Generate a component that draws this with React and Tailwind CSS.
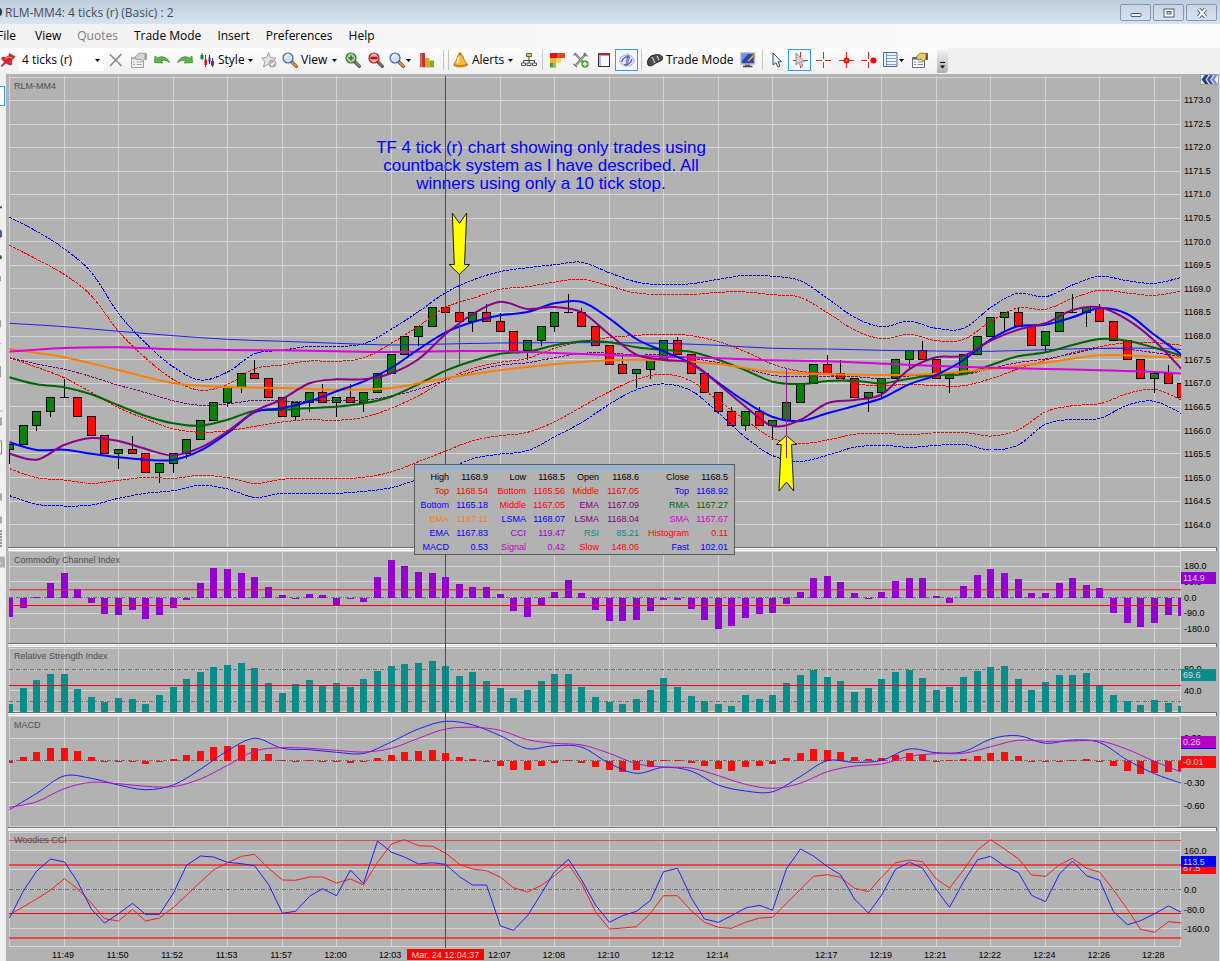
import React from "react";

/* ---------- geometry ---------- */
const BARS = 87;
const xOf = (i) => Math.round(9 + 13.63 * i) + 0.5;
const tickY = (t) => Math.round(100 + t * 4.712) + 0.5;
// Curve samples are stored in thirds of a pixel below a base line.
const third = (base) => (v) => base + v / 3;
const upper = third(190);
const lower = third(540);

function smooth(values, step, toY) {
  const p = values.map((v, k) => [9.5 + 13.63 * k * step, toY(v)]);
  let d = `M${p[0][0]} ${p[0][1]}`;
  for (let k = 0; k < p.length - 1; k++) {
    const a = p[k - 1] || p[k];
    const b = p[k];
    const c = p[k + 1];
    const e = p[k + 2] || c;
    const f = (n) => n.toFixed(1);
    d += `C${f(b[0] + (c[0] - a[0]) / 6)} ${f(b[1] + (c[1] - a[1]) / 6)} ${f(c[0] - (e[0] - b[0]) / 6)} ${f(c[1] - (e[1] - b[1]) / 6)} ${f(c[0])} ${f(c[1])}`;
  }
  return d;
}
const poly = (values, toY) => values.map((v, i) => `${xOf(i)},${toY(v).toFixed(1)}`).join(" ");

/* ---------- data: candles as [colour, top, bottom, high, low] in ticks below 1173.0 ---------- */
const CANDLES = [
  ["g", 73, 74, 73, 77], ["g", 69, 73], ["g", 66, 69, 66, 70], ["g", 63, 66, 63, 67], ["d", 63, 63, 59, 63],
  ["r", 63, 67], ["r", 67, 71], ["r", 71, 75], ["g", 74, 75, 74, 78], ["r", 74, 75, 71, 75],
  ["r", 75, 79], ["g", 77, 79, 77, 81], ["g", 75, 77, 75, 79], ["g", 72, 75, 72, 76], ["g", 68, 72],
  ["g", 64, 68], ["g", 61, 64, 61, 65], ["g", 58, 61, 58, 62], ["r", 58, 59, 55, 59], ["r", 59, 63],
  ["r", 63, 67], ["g", 64, 67, 64, 68], ["g", 62, 64, 62, 66], ["r", 62, 64, 60, 64], ["g", 63, 64, 63, 67],
  ["r", 63, 64, 60, 64], ["g", 62, 64, 62, 66], ["g", 58, 62], ["g", 54, 58], ["g", 50, 54],
  ["g", 48, 50, 48, 52], ["g", 44, 48], ["r", 44, 45], ["r", 45, 47, 43, 47], ["g", 45, 47, 45, 49],
  ["r", 45, 47, 43, 47], ["r", 47, 49, 45, 49], ["r", 49, 53], ["g", 51, 53, 51, 55], ["g", 48, 51, 48, 52],
  ["g", 45, 48, 45, 49], ["d", 45, 45, 41, 45], ["r", 45, 48, 44, 48], ["r", 48, 52], ["r", 52, 56],
  ["r", 56, 58, 54, 58], ["g", 57, 58, 57, 61], ["g", 55, 57, 55, 59], ["g", 51, 55], ["r", 51, 54, 50, 54],
  ["r", 54, 58], ["r", 58, 62], ["r", 62, 66], ["r", 66, 69, 65, 69], ["g", 66, 69, 66, 70],
  ["r", 66, 69, 65, 69], ["g", 68, 69, 68, 72], ["g", 64, 68], ["g", 60, 64], ["g", 56, 60],
  ["r", 56, 58, 54, 58], ["r", 58, 59, 55, 59], ["r", 59, 63], ["g", 62, 63, 62, 66], ["g", 59, 62, 59, 63],
  ["g", 55, 59], ["g", 53, 55, 53, 57], ["r", 53, 55, 51, 55], ["r", 55, 59], ["g", 58, 59, 58, 62],
  ["g", 54, 58], ["g", 50, 54], ["g", 46, 50], ["g", 45, 46, 45, 49], ["r", 45, 48, 44, 48],
  ["r", 48, 52], ["g", 49, 52, 49, 53], ["g", 45, 49], ["d", 45, 45, 41, 45], ["g", 44, 45, 44, 48],
  ["r", 44, 47, 43, 47], ["r", 47, 51], ["r", 51, 55], ["r", 55, 59], ["g", 58, 59, 58, 62],
  ["r", 58, 60, 56, 60], ["r", 60, 63],
];

const BANDS = [
  ["#0000ff", [82, 124, 176, 247, 370, 460, 530, 570, 546, 491, 481, 469, 469, 461, 418, 365, 308, 270, 245, 233, 224, 217, 248, 276, 284, 281, 268, 256, 259, 272, 325, 382, 410, 394, 415, 415, 352, 310, 320, 285, 259, 272, 280, 262]],
  ["#ff0000", [166, 208, 253, 317, 424, 505, 568, 601, 583, 536, 525, 513, 514, 503, 460, 409, 352, 325, 298, 290, 276, 268, 288, 309, 314, 314, 307, 306, 314, 322, 368, 420, 446, 433, 452, 448, 394, 354, 358, 325, 301, 309, 316, 303]],
  ["#ff0000", [503, 532, 563, 607, 653, 687, 716, 727, 722, 709, 696, 689, 691, 682, 655, 617, 570, 535, 517, 505, 475, 455, 443, 436, 433, 437, 455, 485, 523, 544, 552, 580, 587, 583, 587, 587, 566, 537, 511, 488, 470, 458, 458, 466]],
  ["#ff0000", [836, 863, 870, 880, 871, 862, 865, 856, 863, 880, 868, 865, 866, 862, 846, 815, 783, 752, 737, 727, 695, 650, 605, 568, 553, 573, 632, 690, 745, 761, 750, 733, 730, 734, 728, 727, 738, 720, 666, 647, 641, 611, 598, 631]],
  ["#0000ff", [917, 943, 948, 945, 925, 910, 902, 886, 897, 922, 910, 910, 910, 904, 893, 868, 840, 806, 792, 782, 740, 697, 643, 599, 582, 602, 668, 742, 797, 814, 796, 772, 766, 772, 766, 763, 780, 765, 703, 688, 685, 646, 634, 671]],
  ["#800080", [503, 522, 538, 560, 586, 608, 632, 646, 642, 631, 633, 633, 631, 631, 618, 598, 570, 545, 526, 518, 503, 490, 489, 495, 495, 505, 518, 536, 556, 560, 560, 560, 566, 558, 554, 554, 535, 518, 507, 491, 475, 478, 488, 500]],
];

const THIN_EMA = [400, 410, 424, 437, 448, 454, 460, 465, 462, 459, 458, 458, 460, 466, 475, 477, 481, 483, 484, 479, 475, 475, 483];
const SMA = [485, 474, 472, 478, 480, 481, 484, 486, 484, 483, 489, 495, 500, 505, 511, 514, 521, 528, 533, 537, 541, 546, 556];
const EMA = [477, 502, 540, 579, 591, 594, 599, 594, 565, 541, 523, 511, 511, 522, 546, 552, 555, 551, 537, 518, 496, 500, 507];
const RMA = [562, 583, 592, 613, 646, 678, 700, 707, 689, 662, 660, 654, 650, 640, 620, 583, 542, 513, 491, 485, 466, 454, 457, 472, 480, 485, 509, 541, 575, 582, 573, 572, 580, 566, 555, 553, 525, 499, 487, 465, 447, 452, 473, 497];
const LSMA_BLUE = [757, 780, 779, 791, 802, 809, 810, 782, 729, 666, 655, 634, 604, 574, 534, 478, 427, 396, 376, 366, 340, 336, 385, 447, 484, 520, 578, 635, 681, 693, 670, 648, 625, 583, 555, 510, 448, 409, 404, 382, 354, 372, 434, 494];
const LSMA_PURPLE = [791, 809, 765, 744, 753, 777, 796, 773, 724, 664, 628, 580, 568, 568, 550, 508, 432, 372, 335, 357, 351, 367, 433, 494, 510, 519, 582, 650, 708, 690, 640, 630, 613, 538, 502, 497, 452, 419, 400, 360, 352, 389, 452, 538];

const CCI = [231, 204, 171, 129, 99, 148, 189, 221, 225, 210, 237, 225, 204, 179, 129, 84, 87, 99, 111, 141, 165, 174, 162, 165, 196, 176, 186, 111, 60, 78, 96, 99, 111, 132, 141, 141, 162, 212, 231, 196, 156, 120, 159, 210, 243, 243, 240, 212, 179, 179, 206, 240, 266, 258, 234, 221, 219, 191, 156, 114, 108, 126, 159, 176, 156, 123, 114, 114, 168, 189, 138, 105, 87, 99, 117, 159, 159, 129, 114, 135, 144, 219, 249, 261, 249, 225, 228];
const RSI = [492, 444, 420, 402, 402, 447, 471, 486, 474, 477, 492, 465, 441, 417, 396, 381, 375, 369, 384, 429, 459, 432, 420, 435, 429, 441, 417, 393, 378, 372, 369, 363, 378, 408, 396, 423, 444, 474, 450, 423, 402, 402, 441, 471, 486, 492, 477, 450, 414, 441, 468, 483, 492, 498, 465, 477, 465, 429, 405, 390, 411, 423, 456, 444, 417, 396, 390, 414, 450, 441, 411, 393, 381, 378, 417, 450, 426, 405, 405, 399, 435, 465, 483, 495, 480, 489, 498];
const MACD_BARS = [669, 651, 636, 624, 624, 633, 651, 665, 665, 665, 672, 665, 657, 645, 633, 621, 618, 615, 624, 642, 660, 665, 660, 665, 665, 669, 665, 654, 645, 636, 633, 630, 639, 651, 657, 665, 677, 689, 689, 677, 668, 660, 668, 680, 689, 695, 689, 680, 660, 660, 668, 677, 686, 692, 680, 677, 671, 654, 639, 627, 630, 636, 651, 657, 654, 645, 639, 645, 663, 660, 657, 648, 639, 636, 648, 665, 665, 663, 660, 657, 665, 677, 692, 701, 698, 695, 693];
const MACD_LINE = [809, 760, 708, 715, 735, 749, 735, 688, 632, 595, 625, 629, 637, 640, 606, 567, 544, 555, 587, 626, 617, 622, 670, 700, 682, 693, 735, 753, 755, 710, 662, 667, 661, 627, 638, 635, 597, 587, 610, 600, 608, 660, 701, 730];
const MACD_SIGNAL = [802, 785, 746, 727, 731, 739, 740, 717, 676, 633, 623, 625, 631, 636, 625, 595, 567, 562, 571, 599, 610, 615, 640, 671, 681, 684, 707, 733, 745, 730, 695, 678, 672, 649, 641, 640, 620, 601, 604, 603, 603, 628, 664, 697];
const SLOW = [1124, 1100, 1077, 1050, 1016, 1046, 1090, 1136, 1143, 1108, 1143, 1134, 1102, 1066, 1026, 990, 968, 949, 943, 985, 1020, 1021, 1011, 1011, 1029, 1017, 1035, 967, 912, 899, 917, 919, 939, 973, 987, 992, 1012, 1043, 1056, 1036, 1007, 974, 1030, 1115, 1167, 1164, 1160, 1120, 1067, 1067, 1113, 1147, 1162, 1165, 1147, 1134, 1132, 1090, 1048, 1009, 1004, 1012, 1045, 1055, 1012, 968, 960, 965, 1017, 1044, 990, 930, 899, 927, 956, 1005, 1009, 974, 955, 985, 996, 1050, 1108, 1168, 1177, 1145, 1149];
const FAST = [1134, 1052, 994, 957, 966, 1025, 1108, 1149, 1121, 1090, 1123, 1123, 1059, 976, 948, 951, 967, 971, 977, 1033, 1120, 1114, 1069, 1046, 1067, 990, 1031, 903, 937, 951, 972, 968, 973, 1010, 1035, 1035, 1158, 1171, 1127, 1060, 995, 958, 1019, 1095, 1147, 1127, 1114, 1081, 995, 985, 1075, 1137, 1147, 1127, 1104, 1096, 1111, 986, 927, 948, 980, 1004, 1077, 1119, 1066, 988, 967, 984, 1049, 1102, 1025, 959, 949, 978, 998, 1066, 1085, 1002, 963, 1007, 1020, 1115, 1154, 1142, 1121, 1098, 1117];

const TIMES = ["", "11:49", "11:50", "11:52", "11:53", "11:57", "12:00", "12:03", "", "12:07", "12:08", "12:10", "12:12", "12:14", "", "12:17", "12:19", "12:21", "12:22", "12:24", "12:26", "12:28"];

const K = "text-black", R = "text-[#ff0000]", B = "text-[#0000ff]", P = "text-[#800080]", G = "text-[#006400]", O = "text-[#ff8000]", M = "text-[#d800d8]", V = "text-[#9400d3]", T = "text-[#008b8b]", S = "text-[#c000c0]";
const READOUT = [
  [["High", "1168.9", K], ["Low", "1168.5", K], ["Open", "1168.6", K], ["Close", "1168.5", K]],
  [["Top", "1168.54", R], ["Bottom", "1165.56", R], ["Middle", "1167.05", R], ["Top", "1168.92", B]],
  [["Bottom", "1165.18", B], ["Middle", "1167.05", R], ["EMA", "1167.09", P], ["RMA", "1167.27", G]],
  [["EMA", "1167.11", O], ["LSMA", "1168.07", B], ["LSMA", "1168.04", P], ["SMA", "1167.67", M]],
  [["EMA", "1167.83", B], ["CCI", "119.47", V], ["RSI", "85.21", T], ["Histogram", "0.11", R]],
  [["MACD", "0.53", B], ["Signal", "0.42", S], ["Slow", "148.06", R], ["Fast", "102.01", B]],
];

/* ---------- chart pieces ---------- */
function Plot({ top, height, className, label, children }) {
  return (
    <svg role="img" aria-label={label} viewBox={`9 ${top} 1172 ${height}`} preserveAspectRatio="none" className={`block w-full ${className}`}>
      {children}
    </svg>
  );
}

function Grid({ y1, y2, rows }) {
  const cols = [];
  for (let i = 0; i < BARS; i += 4) cols.push(i);
  return (
    <g stroke="#d4d4d4" strokeWidth="1" shapeRendering="crispEdges">
      {rows.map((y) => <line key={y} x1="9" x2="1181" y1={y} y2={y} />)}
      {cols.map((i) => <line key={i} x1={xOf(i)} x2={xOf(i)} y1={y1} y2={y2} />)}
      <line x1="1180.5" x2="1180.5" y1={y1} y2={y2} />
    </g>
  );
}

const Level = ({ y }) => <line x1="9" x2="1181" y1={y} y2={y} stroke="#ff0000" strokeWidth="1" shapeRendering="crispEdges" />;
const SoftLevel = ({ y, w = 2 }) => <line x1="9" x2="1181" y1={y} y2={y} stroke="#f02828" strokeWidth={w} strokeOpacity="0.75" shapeRendering="crispEdges" />;
const Zero = ({ y }) => (
  <g shapeRendering="crispEdges">
    <line x1="9" x2="1181" y1={y} y2={y} stroke="#d4d4d4" />
    <line x1="9" x2="1181" y1={y} y2={y} stroke="#707070" strokeDasharray="4 1 1 1" />
  </g>
);

function Columns({ values, base, fill }) {
  return (
    <g fill={fill} shapeRendering="crispEdges">
      {values.map((v, i) => {
        const y = Math.round(lower(v));
        return <rect key={i} x={xOf(i) - 3.5} width="7" y={Math.min(y, base)} height={Math.max(1, Math.abs(y - base))} />;
      })}
    </g>
  );
}

function Splitter() {
  return (
    <div className="-ml-px mr-[2px] h-1 border-t border-r border-[#6c6c6c] bg-[#ffffff]">
      <div className="mt-px h-px bg-[#d8d8d8]" />
    </div>
  );
}

function Pane({ title, axis, badges, children }) {
  return (
    <section className="flex">
      <div className="relative min-w-0 flex-1">
        {children}
        {title && <h2 className="absolute top-[3px] left-[5px] text-[9px] leading-3 text-[#505050]">{title}</h2>}
      </div>
      <div className="relative flex w-[38px] shrink-0">
        {axis}
        {badges}
      </div>
    </section>
  );
}

const Axis = ({ labels, className }) => (
  <div className={`flex flex-1 flex-col justify-between pl-[3px] text-[9px] leading-3 text-black ${className}`}>
    {labels.map((l) => <span key={l}>{l}</span>)}
  </div>
);
const Badge = ({ className, children }) => (
  <span className={`absolute left-0 w-[35px] pl-[2px] text-[9px] leading-3 text-[#d8d8d8] ${className}`}>{children}</span>
);

function PricePlot() {
  const rows = [77.5];
  for (let k = 0; k <= 18; k++) rows.push(tickY(k * 5));
  return (
    <Plot top={74} height={473} className="h-[473px]" label="Price chart">
      <Grid y1={76} y2={547} rows={rows} />
      <g shapeRendering="crispEdges" stroke="#000000">
        {CANDLES.map(([c, a, b, hi = a, lo = b], i) => {
          const x = xOf(i);
          return (
            <g key={i}>
              <line x1={x} x2={x} y1={tickY(hi)} y2={tickY(lo)} />
              {c === "d" ? (
                <line x1={x - 4.5} x2={x + 4.5} y1={tickY(a)} y2={tickY(a)} />
              ) : (
                <rect x={x - 4} y={tickY(a)} width="8" height={tickY(b) - tickY(a)} fill={c === "g" ? "#0a820a" : "#ff0a0a"} />
              )}
            </g>
          );
        })}
      </g>
      <g fill="none" strokeWidth="1" strokeDasharray="3 1" shapeRendering="crispEdges">
        {BANDS.map(([stroke, v], k) => <path key={k} d={smooth(v, 2, upper)} stroke={stroke} />)}
      </g>
      <g fill="none" strokeWidth="2">
        <path d={smooth(THIN_EMA, 4, upper)} stroke="#2020f0" strokeWidth="1" />
        <path d={smooth(RMA, 2, upper)} stroke="#006400" />
        <path d={smooth(EMA, 4, upper)} stroke="#ff8000" />
        <path d={smooth(SMA, 4, upper)} stroke="#dc00dc" />
        <path d={smooth(LSMA_BLUE, 2, upper)} stroke="#0000ff" />
        <path d={smooth(LSMA_PURPLE, 2, upper)} stroke="#8b008b" />
      </g>
      <g stroke="#8b208b" shapeRendering="crispEdges">
        <line x1="459.5" x2="459.5" y1="274" y2="365" />
        <line x1="786.5" x2="786.5" y1="368" y2="458" />
      </g>
      <g fill="#ffff00" stroke="#202000" strokeWidth="1">
        <path d="M452.3 213L459.5 223.3L466.7 213L464.5 264.5H469.7L459.5 274.3L449 264.5H454.3Z" />
        <path d="M786.5 435.5L796.5 444.5H791.5L793.7 491L786.5 482L779 491L781.2 444.5H776.3Z" />
      </g>
      <line x1="786.5" x2="786.5" y1="437" y2="458" stroke="#8b208b" shapeRendering="crispEdges" />
    </Plot>
  );
}

function Readout() {
  return (
    <table className="absolute top-[390px] left-[408px] w-[321px] table-fixed border-separate border-spacing-0 border border-[#5c5c5c] bg-[#b2b2b2] text-right text-[9px] leading-3">
      <colgroup>
        <col className="w-[34px]" /><col className="w-[39px]" /><col className="w-[38px]" /><col className="w-[39px]" />
        <col className="w-[34px]" /><col className="w-[40px]" /><col className="w-[50px]" /><col className="w-[45px]" />
      </colgroup>
      <thead>
        <tr><th colSpan={8} aria-label="Data window" className="h-[5px] bg-[#99b4d1] p-0 leading-[5px]" /></tr>
      </thead>
      <tbody>
        {READOUT.map((row, r) => (
          <tr key={r} className="h-[14px]">
            {row.map(([name, value, color], c) => (
              <React.Fragment key={c}>
                <th scope="row" className={`p-0 font-normal ${color}`}>{name}</th>
                <td className={`p-0 ${c === 3 ? "pr-[6px]" : ""} ${color}`}>{value}</td>
              </React.Fragment>
            ))}
          </tr>
        ))}
      </tbody>
    </table>
  );
}

function Chart() {
  return (
    <main className="relative min-w-0 flex-1 bg-[#b2b2b2] pl-[3px] font-['Liberation_Sans',sans-serif]">
      <Pane axis={<Axis className="pt-5 pb-4" labels={Array.from({ length: 19 }, (_, k) => (1173 - k / 2).toFixed(1))} />}
        badges={
          <button aria-label="Collapse" className="absolute top-0 right-0 h-[11px] w-[19px] border border-[#a0a0a0] bg-[#e8e8e8]">
            <svg viewBox="0 0 17 9" className="block h-[9px] w-[17px]">
              <path d="M4 0H7.500L4.500 4.500L7.500 9H4L0.500 4.500Z" fill="#1f3f86" />
              <path d="M9 0H12L9 4.500L12 9H9L5.800 4.500Z" fill="#35589c" />
              <path d="M13.500 0H16.500L13.500 4.500L16.500 9H13.500L10.300 4.500Z" fill="#7c90cc" />
            </svg>
          </button>
        }>
        <PricePlot />
        <h1 className="absolute top-[6px] left-[5px] text-[9px] leading-3 text-[#505050]">RLM-MM4</h1>
        <p className="absolute top-[65px] left-[362px] w-[340px] text-center text-[17px] leading-[18px] text-[#0000ff]">
          TF 4 tick (r) chart showing only trades using<br />countback system as I have described. All<br />winners using only a 10 tick stop.
        </p>
      </Pane>
      <Splitter />
      <Pane title="Commodity Channel Index" axis={<Axis className="pt-[9px] pb-2" labels={["180.0", "90.0", "0.0", "-90.0", "-180.0"]} />}
        badges={<Badge className="top-[21px] h-3 bg-[#9400d3]">114.9</Badge>}>
        <Plot top={551} height={92} className="h-[92px]" label="Commodity Channel Index">
          <Grid y1={552} y2={643} rows={[551.5, 566.5, 581.5, 613.5, 628.5]} />
          <Zero y={597.5} />
          <SoftLevel y={589.5} w={1} />
          <Columns values={CCI} base={598} fill="#9400d3" />
          <line x1="9" x2="1181" y1="590" y2="590" stroke="#e02020" strokeOpacity="0.5" strokeWidth="1" />
          <Level y={605.5} />
        </Plot>
      </Pane>
      <Splitter />
      <Pane title="Relative Strength Index" axis={<Axis className="pt-4 pb-[15px]" labels={["80.0", "40.0"]} />}
        badges={<Badge className="top-[22px] h-3 bg-[#0a8c8c]">69.6</Badge>}>
        <Plot top={647} height={65} className="h-[65px]" label="Relative Strength Index">
          <Grid y1={647} y2={712} rows={[648.5, 690.5, 711.5]} />
          <Zero y={669.5} />
          <Zero y={701.5} />
          <Columns values={RSI} base={712} fill="#0a8c8c" />
          <Level y={685.5} />
        </Plot>
      </Pane>
      <Splitter />
      <Pane title="MACD" axis={<Axis className="pt-4 pb-[15px]" labels={["0.30", "0.00", "-0.30", "-0.60"]} />}
        badges={
          <>
            <Badge className="top-5 h-[13px] border-b border-[#0000ff] bg-[#b400c8]">0.26</Badge>
            <Badge className="top-10 h-3 bg-[#ff0a0a]">-0.01</Badge>
          </>
        }>
        <Plot top={716} height={111} className="h-[111px]" label="MACD">
          <Grid y1={716} y2={827} rows={[716.5, 738.5, 782.5, 805.5, 826.5]} />
          <Zero y={760.5} />
          <Columns values={MACD_BARS} base={761} fill="#ff0a0a" />
          <path d={smooth(MACD_LINE, 2, lower)} fill="none" stroke="#2020f0" />
          <path d={smooth(MACD_SIGNAL, 2, lower)} fill="none" stroke="#b414c0" />
        </Plot>
      </Pane>
      <Splitter />
      <Pane title="Woodies CCI" axis={<Axis className="pt-[14px] pb-3" labels={["160.0", "80.0", "0.0", "-80.0", "-160.0"]} />}
        badges={
          <>
            <Badge className="top-[31px] h-3 bg-[#ff0a0a]">87.5</Badge>
            <Badge className="top-[25px] h-[11px] bg-[#0000ff]">113.5</Badge>
          </>
        }>
        <Plot top={831} height={116} className="h-[116px]" label="Woodies CCI">
          <Grid y1={832} y2={947} rows={[832.5, 850.5, 869.5, 908.5, 928.5, 946.5]} />
          <Zero y={889.5} />
          <SoftLevel y={840.5} w={1} />
          <SoftLevel y={865} />
          <Level y={913.5} />
          <SoftLevel y={938} />
          <polyline points={poly(SLOW, lower)} fill="none" stroke="#f02020" />
          <polyline points={poly(FAST, lower)} fill="none" stroke="#2020f0" />
        </Plot>
      </Pane>
      <div className="flex pr-[38px]">
        <div className="relative min-w-0 flex-1">
          <div className="flex overflow-hidden pt-[3px] text-[9px] leading-[11px] text-black">
            {TIMES.map((t, k) => (
              <span key={k} className={`w-[4.652%] shrink-0 pr-px text-center ${k === 0 ? "ml-[-2.326%]" : ""}`}>{t}</span>
            ))}
          </div>
          <span className="absolute top-[2px] left-[398px] h-[11px] w-[77px] bg-[#ff0000] text-center text-[9px] leading-3 whitespace-nowrap text-[#d8d8d8]">Mar, 24 12:04:37</span>
        </div>
      </div>
      <div className="absolute top-[2px] bottom-[13px] left-[439px] w-px bg-[#ff0000]" />
      <Readout />
    </main>
  );
}

/* ---------- icons ---------- */
const Ico = ({ children, className = "" }) => <svg viewBox="0 0 16 16" className={`block h-4 w-4 shrink-0 ${className}`} aria-hidden="true">{children}</svg>;
const Caret = ({ className = "" }) => <svg viewBox="0 0 5 3" className={`block h-[3px] w-[5px] shrink-0 ${className}`} aria-hidden="true"><path d="M0 0H5L2.5 3Z" fill="#000" /></svg>;

const Pin = () => (
  <Ico><path d="M9 1.500L15 4.500L13.500 6.500L12.500 6.500L11.500 10L12 12.500L9.500 13L6 11L2 14.500L1 14L4.500 10L1.500 7L2.500 5L5.500 5.500L9 4Z" fill="#d8242c" stroke="#9c1a20" strokeWidth="0.6" /><path d="M5 6.500L9.500 5L12 6" fill="none" stroke="#ff9090" /></Ico>
);
const Cross = () => <Ico><path d="M2 2.500L13.500 14M13.500 2L2 14" stroke="#8c8c8c" strokeWidth="1.700" /></Ico>;
const Props = ({ gray }) => (
  <Ico>
    <path d="M0.500 5.500H12.500V15.500H0.500Z" fill={gray ? "#f2f2f2" : "#ffffff"} stroke={gray ? "#a0a0a0" : "#6a7078"} />
    <path d="M0.500 5.500H12.500V7.500H0.500Z" fill={gray ? "#b8b8b8" : "#4466b8"} />
    <path d="M2 10H4M2 12.500H4M5.500 10H11M5.500 12.500H11" stroke={gray ? "#a8a8a8" : "#7088c0"} />
    <path d="M4 5L8.500 1L14 1.500V7L11 9.500L9 7L6 8Z" fill={gray ? "#d4d4d4" : "#f0cc58"} stroke={gray ? "#909090" : "#806018"} strokeWidth="0.800" />
    <path d="M15 1V8" stroke={gray ? "#909090" : "#30343c"} strokeWidth="1.500" />
  </Ico>
);
const Undo = ({ flip }) => (
  <Ico className={flip ? "-scale-x-100" : ""}><path d="M0.500 10.500L1 4L3.500 6.200C7 3.500 13 4.500 15.500 10.500C12 8 9.500 7.800 7 8.800L9 11Z" fill="#62b84a" stroke="#2f8428" strokeWidth="0.700" /></Ico>
);
const StyleIcon = () => (
  <Ico><path d="M3 1V8" stroke="#107818" /><path d="M1.500 3H4.500V7H1.500Z" fill="#108818" /><path d="M6.500 3V15" stroke="#c01018" /><path d="M5.500 7.500H8V13H5.500Z" fill="#e81018" /><path d="M10.500 3V12" stroke="#202060" /><path d="M9.500 5.500H11.500V10H9.500Z" fill="#1040d0" /><path d="M13.500 6V15" stroke="#601070" /><path d="M12 9H15V13.500H12Z" fill="#9018a0" /></Ico>
);
const Star = () => (
  <Ico><path d="M7.500 0.500L9.500 5.500L15 6L11 9.500L12 15L7.500 12L2.500 15L4 9.500L0.500 6L5.800 5.500Z" fill="#e8e8e8" stroke="#a0a0a0" /><circle cx="11.500" cy="11.500" r="4" fill="#b0b0b0" /><path d="M9.500 11.500L11 13L13.500 10" fill="none" stroke="#fff" strokeWidth="1.200" /></Ico>
);
const Glass = ({ lens = "#cfe4fa", ring = "#3c62a8", handle = "#d89a38", mark }) => (
  <Ico>
    <path d="M10 10L14.300 14.300" stroke="#5a4a2a" strokeWidth="3.200" strokeLinecap="round" />
    <path d="M10.200 10.200L14.200 14.200" stroke={handle} strokeWidth="2" strokeLinecap="round" />
    <circle cx="6" cy="6" r="5" fill={lens} stroke={ring} strokeWidth="1.200" />
    {!mark && <path d="M3.500 5.500A3 3 0 0 1 6.500 3" fill="none" stroke="#fff" strokeWidth="1.500" />}
    {mark}
  </Ico>
);
const BarsIcon = () => <Ico><path d="M1 1H6V15H1Z" fill="#b83838" /><path d="M6 6H10.500V15H6Z" fill="#e8a020" /><path d="M10.500 8.500H15V15H10.500Z" fill="#68b828" /><path d="M1.500 1.500H3V15H1.500Z" fill="#e07868" /><path d="M0 15.500H16" stroke="#d0d0d0" /></Ico>;
const Bell = () => <Ico><circle cx="7" cy="2" r="1.700" fill="#c08018" /><path d="M7 2.500C4.500 2.500 4.500 5.500 3.500 8C2.500 10 1 11 1 13.500C4 15.500 11 15.500 14.500 13C14 11 12 10 11 7.500C10.500 5 9.500 2.500 7 2.500Z" fill="#f6b93a" stroke="#a86810" strokeWidth="0.900" /><path d="M1 12.500C5 14 10 14 14 12" fill="none" stroke="#c07810" /><path d="M6 5C5 7 5 9 4 11" stroke="#fff3c0" fill="none" strokeWidth="1.800" /></Ico>;
const Tree = () => <Ico><path d="M8 5V8.500M2.500 11V8.500H13.500V11M8 8.500V11" fill="none" stroke="#404850" /><path d="M5.500 1.500H10.500V4.500H5.500Z" fill="#e8c83c" stroke="#706018" /><path d="M0.500 11H4.500V13.500H0.500ZM6 11H10V13.500H6ZM11.500 11H15.500V13.500H11.500Z" fill="#fff" stroke="#505050" /></Ico>;
const Heat = () => <Ico><path d="M0 1H15V6H0Z" fill="#e84818" /><path d="M0 1H7V6H0Z" fill="#d81818" /><path d="M0 6H11V11H0Z" fill="#f0b028" /><path d="M6 6H11V11H6Z" fill="#f4d070" /><path d="M0 11H6V15.500H0Z" fill="#50a028" /><path d="M3 11H6V15.500H3Z" fill="#98c848" /></Ico>;
const Tools = () => <Ico><path d="M2 1.500L11.500 12M13 1.500L3 13" stroke="#686868" strokeWidth="2" /><path d="M2 1.500L11.500 12M13 1.500L3 13" stroke="#c8c8c8" strokeWidth="0.800" /><path d="M0.500 3.500L2.500 1M11 1L12 3.500L15 4M0.500 12L4 15" stroke="#686868" fill="none" strokeWidth="1.200" /><circle cx="12" cy="12" r="3.700" fill="#40a838" /><path d="M12 9.700V14.300M9.700 12H14.300" stroke="#fff" strokeWidth="1.300" /></Ico>;
const Win = () => <Ico><path d="M2.500 1.500H13.500V14.500H2.500Z" fill="#f8f9ff" stroke="#28304c" /><path d="M2 1H14V3.500H2Z" fill="#a82828" /><path d="M4 4V14" stroke="#b4bcdc" strokeWidth="2" /></Ico>;
const Swirl = () => <Ico><ellipse cx="8" cy="8.500" rx="7.300" ry="5.500" fill="#e4e4fa" stroke="#a4a4d8" /><path d="M8.500 1L11 5L9 13L6.500 15L7 8Z" fill="#8c8cd0" /><path d="M2.500 10C4 5 8 3.500 10.500 6M5 12.500C9 13.500 12 11 13 7" fill="none" stroke="#5050b0" strokeWidth="1.200" /></Ico>;
const Gamepad = () => <Ico><path d="M1 13C-0.500 9 2 4 6 3.500C10 2 15 2.500 15.500 5.500C16 9 12 9.500 10 10.500C7 12 3.500 15.500 1 13Z" fill="#4c4c50" stroke="#202022" /><path d="M5 5L8 11M10 4L12 8" stroke="#b8b8bc" strokeWidth="1.500" /></Ico>;
const Monitor = () => <Ico><path d="M1 1H14.500V12H1Z" fill="#2448b8" stroke="#b8b8b8" strokeWidth="1.500" /><path d="M2 2H8L2 9Z" fill="#6c90e8" /><path d="M5 12.500H10V14H5Z" fill="#707070" /><path d="M3 14.500H12.500" stroke="#404040" strokeWidth="1.500" /><path d="M7 9L13 2.500L14.500 4L9 9.500Z" fill="#f0b838" stroke="#804818" strokeWidth="0.600" /></Ico>;
const Pointer = ({ fill = "#ffffff", stroke = "#304870" }) => <path d="M4 1V13L6.800 10.500L9 15L11 14L9 9.800H12.500Z" fill={fill} stroke={stroke} />;
const CrossLines = ({ c = "#e82020" }) => <path d="M8.500 0V7M8.500 10V16M1 8.500H7M10 8.500H16" stroke={c} strokeWidth="1" fill="none" />;
const List = () => <Ico><path d="M1.500 0.500H15V14.500H1.500Z" fill="#eef5ff" stroke="#506890" /><path d="M4.500 1V14" stroke="#6890d0" /><path d="M5 3.500H14.500M5 6.500H14.500M5 9.500H14.500M5 12.500H14.500" stroke="#7ca0dc" /></Ico>;

const Tool = ({ label, active, children }) => (
  <button aria-label={label} className={`flex h-[22px] w-[23px] shrink-0 items-center justify-center ${active ? "border border-[#3399ff] bg-[#f4f9ff]" : ""}`}>{children}</button>
);
const TextTool = ({ icon, text, caret, className }) => (
  <button className={`flex h-[22px] shrink-0 items-center pl-[2px] ${className}`}>
    {icon}
    {text && <span className="flex-1 pl-[3px] text-left whitespace-nowrap">{text}</span>}
    {caret && <Caret className="mr-1 ml-px" />}
  </button>
);
const Sep = () => <span className="mx-[2px] h-5 w-px shrink-0 bg-[#c4c4c4]" />;

function Toolbar() {
  return (
    <div role="toolbar" className="flex h-[26px] bg-[#f0f0f0] text-[12px]">
      <div className="flex items-start bg-gradient-to-b from-[#fdfdfd] to-[#f0f0f0] pt-[1px]">
        <button aria-label="Pin" className="flex h-[22px] w-[19px] items-center pr-1"><Pin /></button>
        <label className="relative flex items-center">
          <select aria-label="Interval" className="h-[22px] w-[85px] appearance-none bg-white pl-[3px] text-black"><option>4 ticks (r)</option></select>
          <Caret className="absolute right-1" />
        </label>
        <Tool label="Delete"><Cross /></Tool>
        <Tool label="Format"><Props gray /></Tool>
        <Tool label="Undo"><Undo /></Tool>
        <Tool label="Redo"><Undo flip /></Tool>
        <TextTool className="ml-px w-[60px]" icon={<StyleIcon />} text="Style" caret />
        <Tool label="Favorite"><Star /></Tool>
        <TextTool className="w-[61px]" icon={<Glass />} text="View" caret />
        <Tool label="Zoom in"><Glass lens="#a8d0a0" ring="#505850" handle="#808080" mark={<path d="M6 3.500V8.500M3.500 6H8.500" stroke="#207820" strokeWidth="1.600" />} /></Tool>
        <Tool label="Zoom out"><Glass lens="#f0b0b0" ring="#a02020" handle="#707070" mark={<path d="M2.500 6H9.500" stroke="#c00c18" strokeWidth="2.600" />} /></Tool>
        <TextTool className="w-[28px]" icon={<Glass />} caret />
        <Tool label="Volume"><BarsIcon /></Tool>
        <div className="flex h-[22px] items-center pl-[3px]"><Sep /><Sep /></div>
        <TextTool className="w-[66px]" icon={<Bell />} text="Alerts" caret />
        <Tool label="Links"><Tree /></Tool>
        <div className="flex h-[22px] items-center pr-px"><Sep /></div>
        <Tool label="Heat map"><Heat /></Tool>
        <Tool label="Studies"><Tools /></Tool>
        <Tool label="Window"><Win /></Tool>
        <Tool label="Auto scale" active><Swirl /></Tool>
        <div className="flex h-[22px] items-center px-px"><Sep /></div>
        <TextTool className="w-[91px]" icon={<Gamepad />} text="Trade Mode" />
        <Tool label="Screen"><Monitor /></Tool>
        <div className="flex h-[22px] items-center pl-px"><Sep /></div>
        <Tool label="Pointer"><Ico><Pointer fill="#f0f4fa" /></Ico></Tool>
        <Tool label="Cross pointer" active><Ico><CrossLines /><g><Pointer fill="#d0d0d0" stroke="#909090" /></g></Ico></Tool>
        <Tool label="Crosshair"><Ico><CrossLines /></Ico></Tool>
        <Tool label="Crosshair point"><Ico><CrossLines /><circle cx="8.500" cy="8.500" r="3" fill="#ff0000" /><circle cx="8.500" cy="8.500" r="1" fill="#ff9090" /></Ico></Tool>
        <Tool label="Crosshair snap"><Ico><path d="M7.500 0V7M7.500 10V16M0 8.500H6M9 8.500H10" stroke="#e82020" fill="none" /><circle cx="12.500" cy="8.500" r="3" fill="#ff0000" /></Ico></Tool>
        <TextTool className="w-[28px]" icon={<List />} caret />
        <Tool label="Properties"><Props /></Tool>
        <button aria-label="More" className="ml-[6px] flex h-[24px] w-[11px] items-end justify-center rounded-r bg-gradient-to-b from-[#f4f4f4] to-[#b0b0b0] pb-1">
          <svg viewBox="0 0 7 7" className="block h-[7px] w-[7px]"><path d="M1 0.500H6" stroke="#000" /><path d="M1 3.500H6L3.500 6.500Z" fill="#000" /></svg>
        </button>
      </div>
    </div>
  );
}

const WinButton = ({ label, children }) => (
  <button aria-label={label} className="flex h-[17px] w-[31px] items-center justify-center rounded-[2px] border border-[#8496b4] bg-gradient-to-b from-[#c6d4e4] to-[#d6e2f0]">
    <svg viewBox="0 0 12 10" className="block h-[10px] w-3">{children}</svg>
  </button>
);

function EdgeStrip() {
  return (
    <svg viewBox="0 74 6 886" preserveAspectRatio="none" className="block w-[6px] shrink-0 bg-[#f0f0f0]" aria-hidden="true">
      <path d="M0 86.500H4.500V105.500H0" fill="#fff" stroke="#3399ff" />
      <path d="M0 206H2V208H0Z" fill="#903060" />
      <path d="M0 229L2 231V236L0 238Z" fill="#4058b0" />
      <circle cx="0" cy="257" r="2" fill="#307020" />
      <path d="M0 276H1V281H0ZM0 320H1V327H0ZM0 343H1V344H0ZM0 366H1V377H0Z" fill="#a0a0a0" />
      <path d="M0 410.500H3" stroke="#c0c0c0" />
      <path d="M0 417H2V425H0ZM0 493H2V500H0ZM0 516H2V523H0Z" fill="#a8a8a8" />
      <path d="M0 440.500H1.500V453.500H0" fill="#fff" stroke="#808080" />
      <path d="M0 530.500H2M0 533.500H2M0 536.500H2M0 539.500H2M0 542.500H2M0 545.500H2" stroke="#303848" />
      <path d="M0 556H5V567H0Z" fill="#b0b0b0" /><path d="M0 562H1V563H0Z" fill="#fff" />
    </svg>
  );
}

export default function App() {
  return (
    <div className="flex min-h-screen flex-col bg-[#f8f8f8] font-['Open_Sans',sans-serif] text-black">
      <header className="flex h-6 items-start bg-gradient-to-b from-[#becddb] to-[#d7e4f2] pr-[3px]">
        <span className="-ml-1 h-2 w-[6px] self-center rounded-full bg-[#303858]" />
        <span className="flex-1 pl-[3px] text-[12px] leading-[26px] text-[#484c54]">RLM-MM4: 4 ticks (r) (Basic) : 2</span>
        <div className="flex gap-[2px] pt-1">
          <WinButton label="Minimize"><rect x="1" y="5.500" width="10" height="3" rx="0.500" fill="#fff" stroke="#50586c" /></WinButton>
          <WinButton label="Restore"><rect x="1" y="1" width="10" height="8" fill="#fff" stroke="#50586c" /><rect x="4" y="3.500" width="4" height="2.500" fill="#c8d4e4" stroke="#50586c" /></WinButton>
          <WinButton label="Close"><path d="M2.500 1L9.500 9M9.500 1L2.500 9" stroke="#50586c" strokeWidth="4" /><path d="M2.500 1L9.500 9M9.500 1L2.500 9" stroke="#fff" strokeWidth="2" /></WinButton>
        </div>
      </header>
      <nav className="flex h-6 items-center gap-4 bg-gradient-to-r from-[#f1f1f1] to-[#fcfcfc] text-[12px]">
        {["File", "View", "Quotes", "Trade Mode", "Insert", "Preferences", "Help"].map((m) => (
          <button key={m} className={m === "Quotes" ? "text-[#808080]" : m === "File" ? "-ml-[3px] mr-[3px]" : ""}>{m}</button>
        ))}
      </nav>
      <Toolbar />
      <div className="flex">
        <EdgeStrip />
        <Chart />
        <div className="w-px shrink-0 bg-[#d7e4f2]" />
      </div>
    </div>
  );
}
